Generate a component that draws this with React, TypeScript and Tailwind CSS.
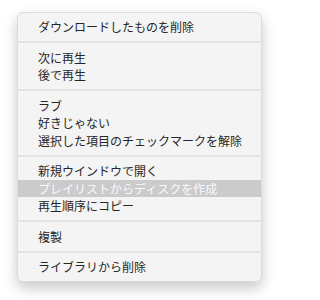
const groups: string[][] = [
  ["ダウンロードしたものを削除"],
  ["次に再生", "後で再生"],
  ["ラブ", "好きじゃない", "選択した項目のチェックマークを解除"],
  ["新規ウインドウで開く", "プレイリストからディスクを作成", "再生順序にコピー"],
  ["複製"],
  ["ライブラリから削除"],
];

const highlighted = "プレイリストからディスクを作成";

export default function App() {
  return (
    <div className="w-[279px] h-[300px] bg-white pt-[12px] pl-[17px]">
      <div
        className="w-[245px] rounded-[6px] bg-[#f4f4f4] py-[5px] border border-[#dcdcdc] shadow-[0_6px_14px_rgba(0,0,0,0.22)] text-[12px] text-[#262626]"
        style={{ fontFamily: '"Noto Sans CJK JP", "Noto Sans", sans-serif' }}
      >
        {groups.map((group, gi) => (
          <div key={gi}>
            {gi > 0 && <div className="h-[2px] my-[5.5px] bg-[#e3e3e3]" />}
            {group.map((item) => (
              <div
                key={item}
                className={
                  item === highlighted
                    ? "h-[17.5px] leading-[17.5px] pl-[20px] bg-[#cbcbcb] text-[#f7faff]"
                    : "h-[17.5px] leading-[17.5px] pl-[20px]"
                }
              >
                {item}
              </div>
            ))}
          </div>
        ))}
      </div>
    </div>
  );
}
